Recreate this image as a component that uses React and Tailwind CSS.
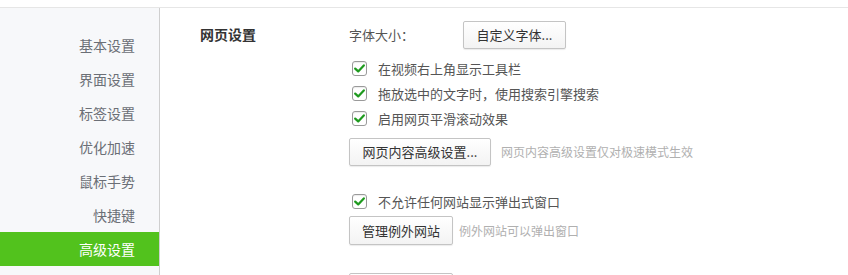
import React from "react";

const menu = ["基本设置", "界面设置", "标签设置", "优化加速", "鼠标手势", "快捷键", "高级设置"];

const Check = ({ label }) => (
  <div className="flex h-[25px] items-center">
    <span className="ml-[3px] flex h-[15px] w-[15px] items-center justify-center rounded-[3px] border border-[#9a9a9a] bg-white shadow-[inset_0_1px_1px_rgba(0,0,0,0.08)]">
      <svg width="11" height="9" viewBox="0 0 11 9">
        <path d="M1.2 4.6 L4.2 7.4 L9.8 1.4" fill="none" stroke="#1e9a1e" strokeWidth="2.2" strokeLinecap="round" strokeLinejoin="round" />
      </svg>
    </span>
    <span className="ml-[11px] text-[13px] text-[#555]">{label}</span>
  </div>
);

const Btn = ({ children, w }) => (
  <button
    className={`flex h-[28px] items-center justify-center rounded-[2px] border border-[#c4c4c4] bg-gradient-to-b from-white to-[#f3f3f3] text-[13px] text-[#333] shadow-[0_1px_1px_rgba(0,0,0,0.08)] ${w}`}
  >
    {children}
  </button>
);

export default function App() {
  return (
    <div
      className="h-[275px] w-[848px] overflow-hidden bg-white"
      style={{ fontFamily: '"Noto Sans CJK SC", "Noto Sans", sans-serif' }}
    >
      <div className="h-[8px] border-b border-[#e6e6e6]" />
      <div className="flex h-[267px]">
        {/* sidebar */}
        <div className="w-[160px] shrink-0 border-r border-[#cfcfcf] bg-[#f7f8fa] pt-[20px]">
          {menu.map((m) => (
            <div
              key={m}
              className={`flex h-[34px] items-center justify-end pr-[24px] text-[14px] ${
                m === "高级设置" ? "bg-[#52c21d] text-white" : "text-[#6b6f76]"
              }`}
            >
              {m}
            </div>
          ))}
        </div>

        {/* content */}
        <div className="flex flex-1 pl-[40px] pt-[13px]">
          <div className="w-[149px] pt-[3px] text-[14px] font-bold text-[#333]">网页设置</div>
          <div className="flex flex-col">
            <div className="flex h-[27px] items-center">
              <span className="w-[114px] text-[13px] text-[#555]">字体大小：</span>
              <Btn w="w-[103px] h-[27px]">自定义字体...</Btn>
            </div>
            <div className="mt-[8px]">
              <Check label="在视频右上角显示工具栏" />
              <Check label="拖放选中的文字时，使用搜索引擎搜索" />
              <Check label="启用网页平滑滚动效果" />
            </div>
            <div className="mt-[7px] flex items-center">
              <Btn w="w-[142px]">网页内容高级设置...</Btn>
              <span className="ml-[10px] text-[12px] text-[#b0b0b0]">网页内容高级设置仅对极速模式生效</span>
            </div>
            <div className="mt-[23px]">
              <Check label="不允许任何网站显示弹出式窗口" />
            </div>
            <div className="mt-[2px] flex items-center">
              <Btn w="w-[104px] h-[29px]">管理例外网站</Btn>
              <span className="ml-[6px] text-[12px] text-[#b0b0b0]">例外网站可以弹出窗口</span>
            </div>
            <div className="mt-[28px]">
              <Btn w="w-[104px]"> </Btn>
            </div>
          </div>
        </div>
      </div>
    </div>
  );
}
